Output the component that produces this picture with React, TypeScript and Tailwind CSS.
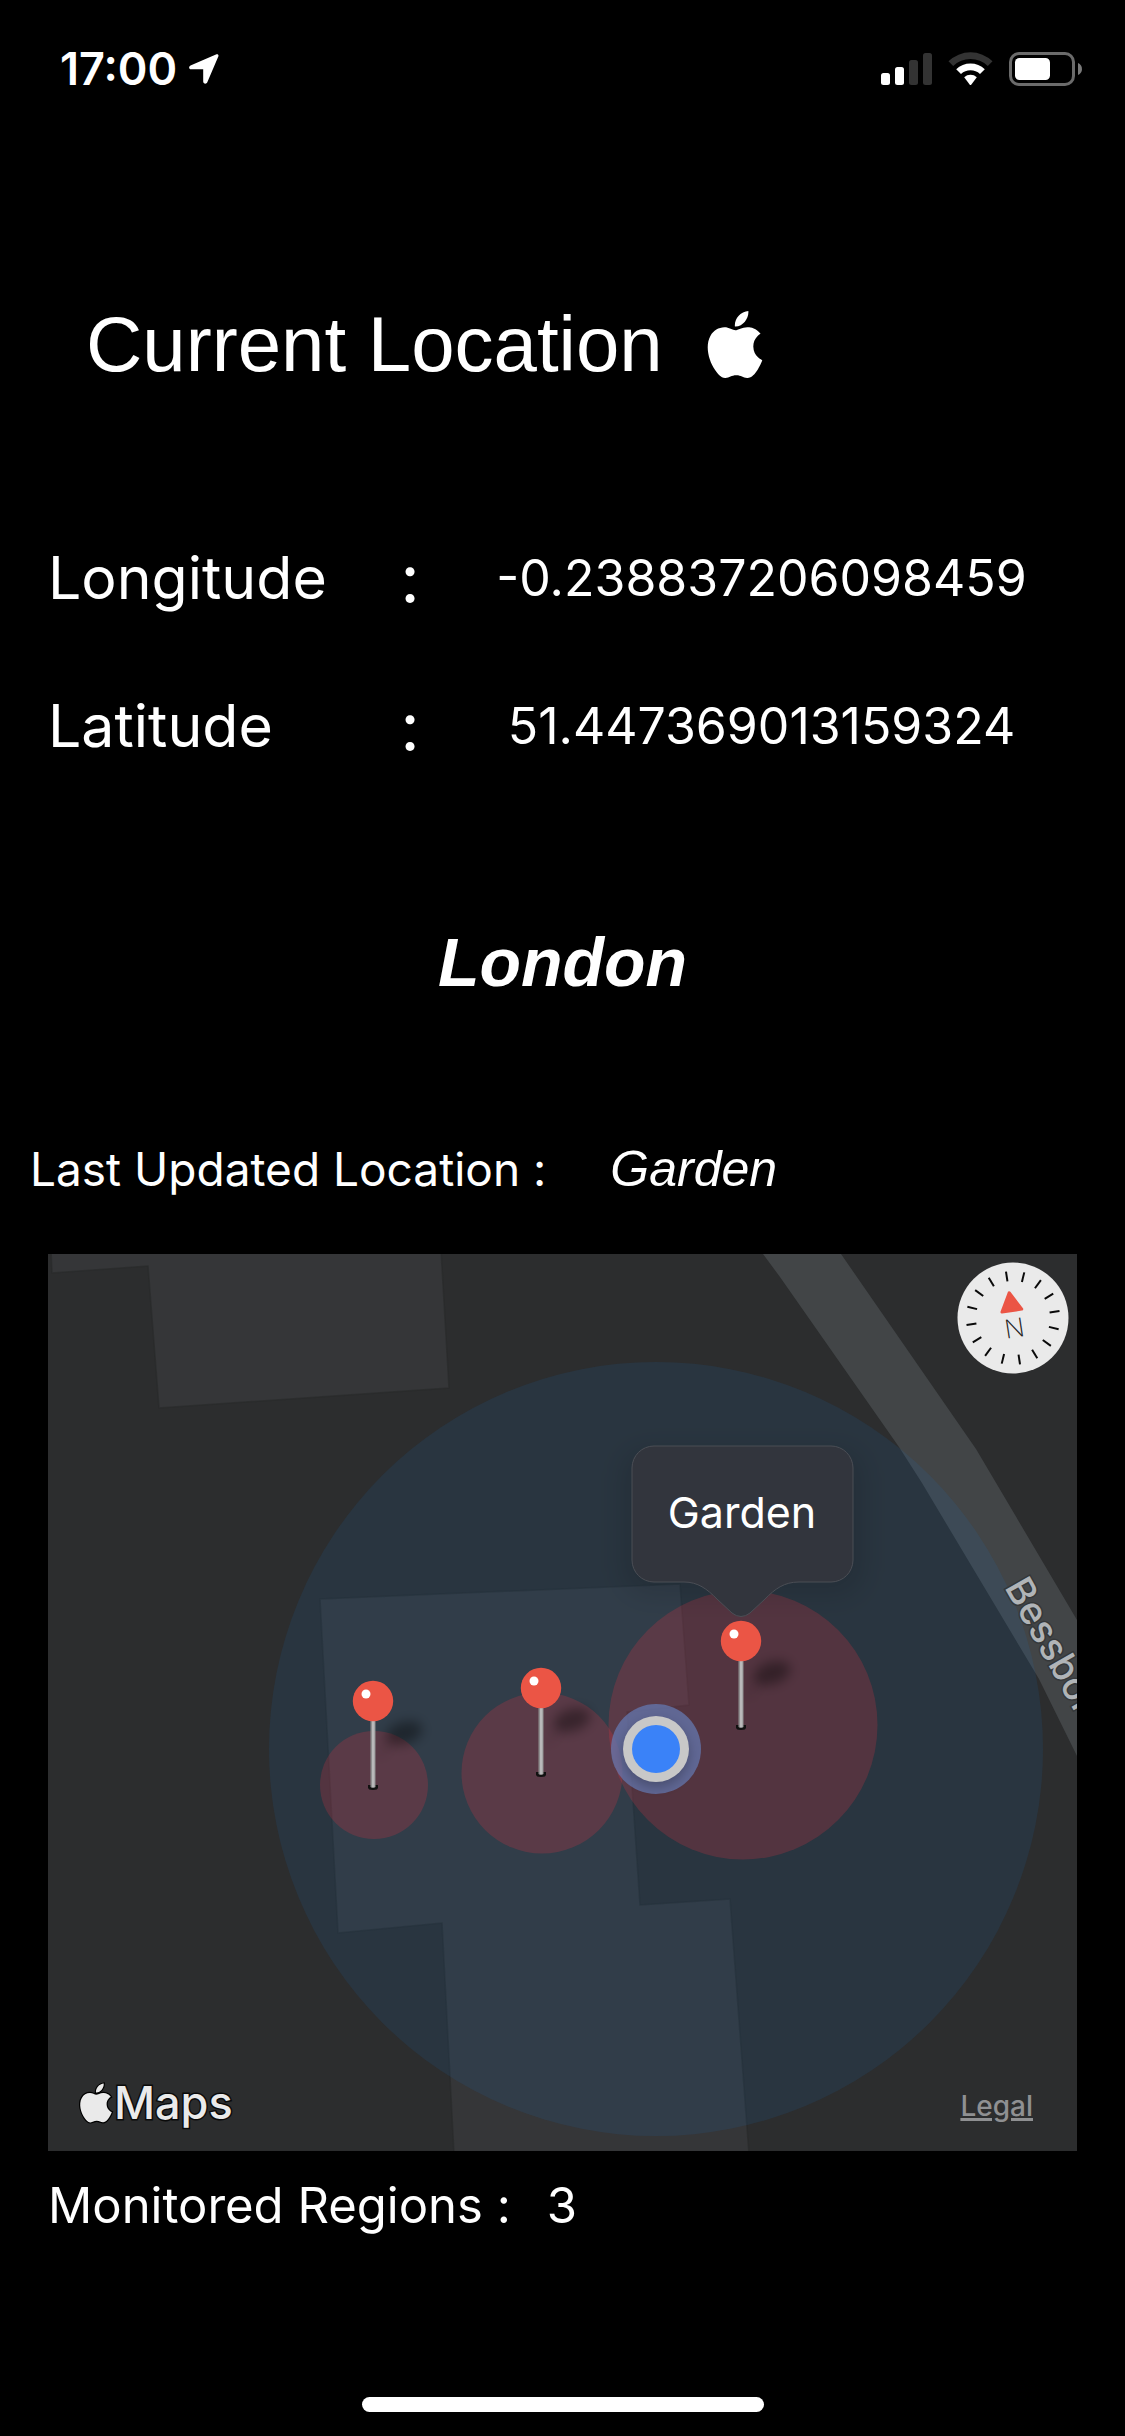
import React from "react";

const APPLE_PATH =
  "M12.152 6.896c-.948 0-2.415-1.078-3.96-1.04-2.04.027-3.91 1.183-4.961 3.014-2.117 3.675-.546 9.103 1.519 12.09 1.013 1.454 2.208 3.09 3.792 3.039 1.52-.065 2.09-.987 3.935-.987 1.831 0 2.35.987 3.96.948 1.637-.026 2.676-1.48 3.676-2.948 1.156-1.688 1.636-3.325 1.662-3.415-.039-.013-3.182-1.221-3.22-4.857-.026-3.04 2.48-4.494 2.597-4.559-1.429-2.09-3.623-2.324-4.39-2.376-2-.156-3.675 1.09-4.61 1.09zM15.53 3.83c.843-1.012 1.4-2.427 1.245-3.83-1.207.052-2.662.805-3.532 1.818-.78.896-1.454 2.338-1.273 3.714 1.338.104 2.715-.688 3.559-1.701";

function StatusBar() {
  return (
    <header className="flex items-center justify-between pt-[47px] pr-[42px] pl-[60px]">
      <div className="flex items-center gap-3">
        <time className="text-[45px] leading-[44px] font-semibold">17:00</time>
        <svg viewBox="0 0 30 30" className="size-[30px]" fill="#fff" aria-label="Location in use">
          <path d="M27.5.3 1.5 11.4C-.6 12.4-.2 15.3 2.1 15.3H14.2V27.600C14.200 29.900 17.300 30.600 18.300 28.300L29.300 2.500C29.900 1 28.900-.2 27.500.3Z" />
        </svg>
      </div>
      <div className="flex items-center gap-4">
        <svg viewBox="0 0 51 34" className="h-[34px] w-[51px]" aria-label="Signal strength">
          <rect x="0" y="21" width="9" height="12" rx="2.500" fill="#fff" />
          <rect x="14" y="15" width="9" height="18" rx="2.500" fill="#fff" />
          <rect x="28" y="8" width="9" height="25" rx="2.500" fill="#333" />
          <rect x="42" y="1" width="9" height="32" rx="2.500" fill="#333" />
        </svg>
        <svg viewBox="0 0 45 34" className="h-[34px] w-[45px]" aria-label="Wi-Fi">
          <path d="M0.500 9.300a31.500 31.500 0 0 1 44 0l-4.700 4.700a25 25 0 0 0-34.600 0Z" fill="#333" />
          <path d="M8.200 17.200a20.600 20.600 0 0 1 28.600 0l-4.800 4.800a14 14 0 0 0-19 0Z" fill="#fff" />
          <path d="M16.200 25.200a9.300 9.300 0 0 1 12.600 0l-5.400 7.300a1.200 1.200 0 0 1-1.800 0Z" fill="#fff" />
        </svg>
        <svg viewBox="0 0 74 34" className="h-[34px] w-[74px]" aria-label="Battery">
          <rect x="1.500" y="1.500" width="63" height="31" rx="8.500" fill="none" stroke="#6b6b6b" strokeWidth="3" />
          <rect x="6" y="6" width="35" height="22" rx="4.500" fill="#fff" />
          <path d="M69 11c5.300 1.800 5.300 10.200 0 12Z" fill="#7a7a7a" />
        </svg>
      </div>
    </header>
  );
}

function Coordinate({ label, value }: { label: string; value: string }) {
  return (
    <div className="grid grid-cols-[330px_64px_1fr] items-center leading-[72px]">
      <dt className="text-[59px]">{label}</dt>
      <span className="text-center text-[68px]">:</span>
      <dd className="pl-1 text-center text-[50px]">{value}</dd>
    </div>
  );
}

function Pin({ x, y }: { x: number; y: number }) {
  return (
    <g transform={`translate(${x} ${y})`}>
      <path d="M6 26 L20 8" stroke="#000" strokeOpacity="0.100" strokeWidth="6" filter="url(#soft)" transform="translate(0 30)" />
      <ellipse cx="31" cy="32" rx="19" ry="11" fill="#000" fillOpacity="0.380" filter="url(#soft)" transform="rotate(-18 31 32)" />
      <path d="M-5 84H5V86.500Q5 89 0 89Q-5 89-5 86.500Z" fill="#111" />
      <path d="M-2.500 18H2.500V86Q0 88-2.500 86Z" fill="#8f8f90" />
      <path d="M-1 20H1.500V86H-1Z" fill="#b9b9ba" />
      <circle r="20.200" fill="#eb5545" />
      <circle cx="-7" cy="-7" r="4.500" fill="#fff" />
    </g>
  );
}

const TICKS = Array.from({ length: 16 }, (_, i) => i * 22.5);

function Compass() {
  return (
    <button type="button" aria-label="Compass" className="absolute top-2 right-2 rounded-full">
      <svg viewBox="0 0 112 112" className="size-28">
        <circle cx="56" cy="56" r="55.500" fill="#eaeaea" />
        <g transform="rotate(-8.600 56 56)">
          {TICKS.map((angle) => (
            <path key={angle} d="M56 9V19" stroke="#0a0a0a" strokeWidth="2" transform={`rotate(${angle} 56 56)`} />
          ))}
          <path d="M56 30.500 46 48.500H66Z" fill="#eb5545" stroke="#eb5545" strokeWidth="3" strokeLinejoin="round" />
          <text x="56" y="75.500" textAnchor="middle" fontSize="26" fontWeight="200" fill="#222">
            N
          </text>
        </g>
      </svg>
    </button>
  );
}

function MapView() {
  return (
    <section aria-label="Map" className="relative aspect-[1029/897] overflow-hidden bg-[#2c2d2e]">
      <svg viewBox="0 0 1029 897" className="block size-full">
        <defs>
          <filter id="soft" x="-60%" y="-100%" width="220%" height="300%">
            <feGaussianBlur stdDeviation="6" />
          </filter>
          <filter id="glow" x="-50%" y="-50%" width="200%" height="200%">
            <feGaussianBlur stdDeviation="14" />
          </filter>
        </defs>

        <g fill="#353638" stroke="#28292a" strokeOpacity="0.600" strokeWidth="1.500">
          <path d="M3-4 4 19 100 12 111 154 401 134 393-4Z" />
          <path d="M272 345 632 330 641 451 579 458 592 651 682 645 701 900 406 900 394 669 290 679Z" />
        </g>
        <path d="M715 0 732 23 851 193 874 229 991 425 1029 502V366L928 195 793 0Z" fill="#424547" />

        <circle cx="608" cy="495" r="387" fill="#1482e1" fillOpacity="0.100" />
        <g fill="#ff3040" fillOpacity="0.200">
          <circle cx="326" cy="531" r="54" />
          <circle cx="494" cy="519" r="80.500" />
          <circle cx="695" cy="471" r="134.500" />
        </g>

        <text transform="translate(956 333) rotate(60.500)" fontSize="38" fontWeight="500" fill="#b0b4b7" stroke="#35383a" strokeWidth="3" paintOrder="stroke">
          Bessbor
        </text>

        <Pin x={325} y={447} />
        <Pin x={493} y={434} />

        <circle cx="608" cy="495" r="45" fill="#6478b0" fillOpacity="0.750" />
        <circle cx="608" cy="500" r="33" fill="#000" fillOpacity="0.250" filter="url(#soft)" />
        <circle cx="608" cy="495" r="33" fill="#c8c8c8" />
        <circle cx="608" cy="495" r="24" fill="#3a82f8" />

        <rect x="575" y="196" width="240" height="145" rx="24" fill="#000" fillOpacity="0.120" filter="url(#glow)" />
        <path
          d="M606 192H783A22 22 0 0 1 805 214V306A22 22 0 0 1 783 328H751C736 328 727 335 717 345L702 359Q693 366 684 359L669 345C659 335 650 328 636 328H606A22 22 0 0 1 584 306V214A22 22 0 0 1 606 192Z"
          fill="#32353d"
          stroke="#4b4e55"
          strokeWidth="1"
        />
        <text x="694" y="274" textAnchor="middle" fontSize="43" fill="#fff">
          Garden
        </text>
        <Pin x={693} y={387} />
      </svg>

      <Compass />

      <div className="absolute inset-x-0 bottom-0 flex items-end justify-between pr-11 pb-5 pl-[30px]">
        <div className="flex items-center">
          <svg viewBox="1 -1 22 26" className="h-[42px] w-9" fill="#eaeaea" stroke="#000" strokeWidth="1.500" paintOrder="stroke" aria-label="Apple">
            <path d={APPLE_PATH} />
          </svg>
          <span className="text-[45px] leading-[56px] font-medium text-[#eaeaea] [-webkit-text-stroke:3px_#0a0a0a] [paint-order:stroke_fill]">Maps</span>
        </div>
        <a href="#legal" className="text-[28px] leading-[50px] font-medium text-[#8f9092] underline decoration-[3px] underline-offset-2">
          Legal
        </a>
      </div>
    </section>
  );
}

export default function App() {
  return (
    <div className="flex min-h-screen flex-col bg-black font-['Inter',sans-serif] text-white">
      <StatusBar />

      <main className="flex flex-col">
        <h1 className="mt-[213px] flex items-center gap-11 pl-[86px] font-['Liberation_Sans',sans-serif] text-[78px] leading-[80px]">
          Current Location
          <svg viewBox="2 0 20 24" className="h-[67px] w-14" fill="#fff" aria-label="Apple">
            <path d={APPLE_PATH} />
          </svg>
        </h1>

        <dl className="mt-[158px] flex flex-col gap-[76px] px-12">
          <Coordinate label="Longitude" value="-0.238837206098459" />
          <Coordinate label="Latitude" value="51.447369013159324" />
        </dl>

        <h2 className="mt-40 text-center font-['Liberation_Sans',sans-serif] text-[68px] leading-[80px] font-bold italic">London</h2>

        <p className="mt-[137px] flex gap-16 px-[30px] text-[46px] leading-[60px]">
          <span>Last Updated Location :</span>
          <em className="font-['Liberation_Sans',sans-serif] text-[50px]">Garden</em>
        </p>

        <div className="mt-[55px] px-12">
          <MapView />
        </div>

        <p className="mt-[25px] flex gap-9 px-12 text-[49px] leading-[60px]">
          <span>Monitored Regions :</span>
          <span>3</span>
        </p>
      </main>

      <footer className="mt-auto flex justify-center pb-6">
        <div className="h-[15px] w-[402px] rounded-full bg-white" />
      </footer>
    </div>
  );
}
